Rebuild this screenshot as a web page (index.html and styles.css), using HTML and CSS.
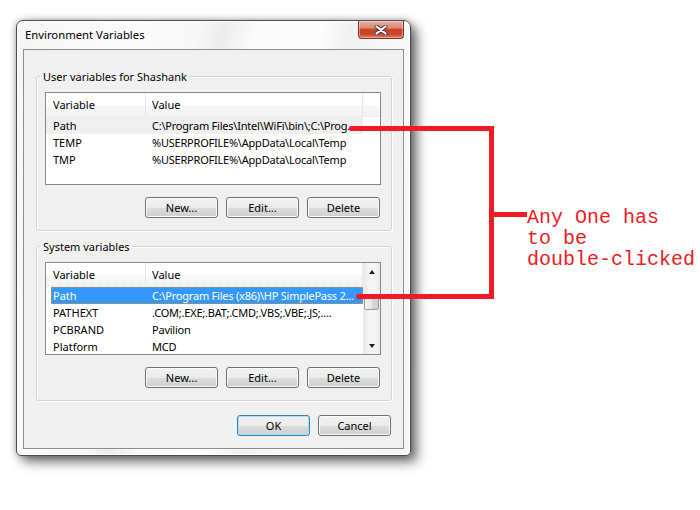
FILE: index.html
```html
<!DOCTYPE html>
<html lang="en">

<head>
  <link rel="stylesheet" href="styles.css">
</head>

<body>
  <div class="screen">
    <div class="window">
      <div class="titlebar">
        <span class="title">Environment Variables</span>
        <div class="close">
          <svg width="14" height="10" viewBox="0 0 14 10">
            <path d="M2.5 1.5 L11.5 8.5 M11.5 1.5 L2.5 8.5" stroke="#3d3d45" stroke-width="4" stroke-linecap="round" fill="none"/>
            <path d="M2.5 1.5 L11.5 8.5 M11.5 1.5 L2.5 8.5" stroke="#ffffff" stroke-width="2.2" stroke-linecap="round" fill="none"/>
          </svg>
        </div>
      </div>

      <div class="client">
        <fieldset class="group">
          <legend>User variables for Shashank</legend>
          <div class="group-body">
            <div class="list">
              <div class="list-main">
                <div class="list-head">
                  <div class="col c1">Variable</div>
                  <div class="col c2">Value</div>
                  <div class="col c3"></div>
                </div>
                <div class="row inactive">
                  <div class="c1">Path</div>
                  <div class="c2">C:\Program Files\Intel\WiFi\bin\;C:\Prog.</div>
                </div>
                <div class="row">
                  <div class="c1">TEMP</div>
                  <div class="c2">%USERPROFILE%\AppData\Local\Temp</div>
                </div>
                <div class="row">
                  <div class="c1">TMP</div>
                  <div class="c2">%USERPROFILE%\AppData\Local\Temp</div>
                </div>
              </div>
            </div>
            <div class="btn-row">
              <button class="btn">New...</button>
              <button class="btn">Edit...</button>
              <button class="btn">Delete</button>
            </div>
          </div>
        </fieldset>

        <fieldset class="group">
          <legend>System variables</legend>
          <div class="group-body">
            <div class="list">
              <div class="list-main">
                <div class="list-head">
                  <div class="col c1">Variable</div>
                  <div class="col c2">Value</div>
                </div>
                <div class="row selected">
                  <div class="c1">Path</div>
                  <div class="c2">C:\Program Files (x86)\HP SimplePass 2...</div>
                </div>
                <div class="row">
                  <div class="c1">PATHEXT</div>
                  <div class="c2">.COM;.EXE;.BAT;.CMD;.VBS;.VBE;.JS;....</div>
                </div>
                <div class="row">
                  <div class="c1">PCBRAND</div>
                  <div class="c2">Pavilion</div>
                </div>
                <div class="row">
                  <div class="c1">Platform</div>
                  <div class="c2">MCD</div>
                </div>
              </div>
              <div class="scrollbar">
                <div class="sb-arrow"><span class="tri up"></span></div>
                <div class="sb-gap"></div>
                <div class="sb-thumb"></div>
                <div class="sb-track"></div>
                <div class="sb-arrow"><span class="tri down"></span></div>
              </div>
            </div>
            <div class="btn-row">
              <button class="btn">New...</button>
              <button class="btn">Edit...</button>
              <button class="btn">Delete</button>
            </div>
          </div>
        </fieldset>

        <div class="dlg-row">
          <button class="btn default">OK</button>
          <button class="btn">Cancel</button>
        </div>
      </div>
    </div>

    <!-- red annotation drawn over the screenshot -->
    <div class="mark line-top"></div>
    <div class="mark line-vert"></div>
    <div class="mark line-bottom"></div>
    <div class="mark line-mid"></div>
    <div class="note">Any One has
to be
double-clicked</div>
  </div>
</body>

</html>
```

FILE: styles.css
```css
* {
  box-sizing: border-box;
}

body {
  margin: 0;
  background: #ffffff;
  font-family: "Noto Sans", "Open Sans", sans-serif;
  font-size: 11px;
  color: #000;
}

.screen {
  position: relative;
  width: 700px;
  height: 510px;
  overflow: hidden;
  padding: 20px 0 0 16px;
}

.window {
  width: 395px;
  height: 436px;
  border: 1px solid #4b4b4b;
  border-radius: 7px 7px 5px 5px;
  padding: 0 6px 6px;
  background: linear-gradient(105deg, #f5f5f5 0%, #fbfbfb 22%, #f7f7f7 36%, #ececec 41%, #fafafa 47%, #fdfdfd 60%, #f1f1f1 66%, #f9f9f9 76%, #f5f5f5 100%);
  box-shadow: inset 0 0 0 1px #ffffff, 6px 6px 12px rgba(0, 0, 0, 0.55), 0 0 7px rgba(0, 0, 0, 0.3);
}

.titlebar {
  height: 28px;
  display: flex;
  justify-content: space-between;
  align-items: flex-start;
}

.title {
  padding: 6px 0 0 2px;
  line-height: 15px;
  font-size: 11.3px;
}

.close {
  width: 46px;
  height: 18px;
  border: 1px solid #7a3226;
  border-top: none;
  border-radius: 0 0 4px 4px;
  background: linear-gradient(#eab0a2 0%, #dc8a77 40%, #c8442b 50%, #c9432a 75%, #e07a5c 100%);
  box-shadow: inset 0 0 0 1px rgba(255, 220, 210, 0.5);
  display: flex;
  align-items: center;
  justify-content: center;
}

.client {
  height: 400px;
  border: 1px solid #8d8d8d;
  background: #f0f0f0;
  padding: 19px 11px 0 12px;
}

.group {
  margin: 0;
  padding: 0;
  min-width: 0;
  border: 1px solid #cdd6dc;
  border-radius: 3px;
  box-shadow: inset 1px 1px 0 #ffffff, 1px 1px 0 #ffffff;
}

.group + .group {
  margin-top: 8px;
}

.group legend {
  margin-left: 4px;
  padding: 0 2px;
  line-height: 15px;
}

.group-body {
  padding: 8px 10px 12px 8px;
}

.list {
  height: 93px;
  border: 1px solid #828790;
  background: #ffffff;
  display: flex;
  overflow: hidden;
}

.list-main {
  flex: 1;
  min-width: 0;
}

.list-head {
  display: flex;
  height: 24px;
  background: linear-gradient(#ffffff 0%, #ffffff 50%, #f7f8f9 51%, #f2f3f5 100%);
  border-bottom: 1px solid #ececec;
}

.list-head .col {
  display: flex;
  align-items: center;
  padding-bottom: 1px;
  border-right: 1px solid #e3e6ea;
}

.c1 {
  width: 100px;
  padding-left: 7px;
  flex-shrink: 0;
}

.c2 {
  width: 217px;
  padding-left: 6px;
  flex-shrink: 0;
  white-space: nowrap;
  overflow: hidden;
}

.row .c2 {
  letter-spacing: -0.22px;
}

.list-head .c3 {
  flex: 1;
  border-right: none;
}

.row {
  display: flex;
  height: 17px;
  line-height: 17px;
  width: 317px;
}

.row.inactive {
  background: #efefef;
}

.row.selected {
  margin-left: 5px;
  width: 312px;
  background: #3399ff;
  color: #ffffff;
  outline: 1px dotted #d38a3a;
  outline-offset: -1px;
}

.row.selected .c1 {
  width: 95px;
  padding-left: 2px;
}

.scrollbar {
  width: 17px;
  display: flex;
  flex-direction: column;
  background: linear-gradient(90deg, #e8e8e8, #f5f5f5 30%, #f5f5f5 70%, #eaeaea);
  border-left: 1px solid #efefef;
}

.sb-arrow {
  height: 17px;
  display: flex;
  align-items: center;
  justify-content: center;
}

.sb-gap {
  height: 17px;
}

.sb-thumb {
  height: 13px;
  margin: 0 1px 0 0;
  border: 1px solid #999999;
  border-radius: 2px;
  background: linear-gradient(90deg, #f4f4f4, #e8e8e8 50%, #d8d8d8 51%, #d0d0d0);
}

.sb-track {
  flex: 1;
}

.tri {
  width: 0;
  height: 0;
  border-left: 3.5px solid transparent;
  border-right: 3.5px solid transparent;
}

.tri.up {
  border-bottom: 4px solid #202020;
}

.tri.down {
  border-top: 4px solid #202020;
}

.btn-row {
  display: flex;
  justify-content: flex-end;
  gap: 8px;
  margin-top: 12px;
  padding-right: 1px;
}

.btn {
  width: 73px;
  height: 21px;
  padding: 0;
  border: 1px solid #707070;
  border-radius: 3px;
  background: linear-gradient(#f2f2f2 0%, #ebebeb 50%, #dddddd 51%, #cfcfcf 100%);
  box-shadow: inset 0 0 0 1px #fbfbfb;
  font-family: inherit;
  font-size: 11px;
  color: #000;
}

.btn.default {
  border-color: #3c7fb1;
  box-shadow: inset 0 0 0 1px #a9e2f8;
}

.dlg-row {
  display: flex;
  justify-content: flex-end;
  gap: 8px;
  margin-top: 14px;
  padding-right: 1px;
}

.mark {
  position: absolute;
  background: #ed1c24;
}

.line-top {
  left: 349px;
  top: 126px;
  width: 145px;
  height: 5px;
  border-radius: 2px 0 0 2px;
}

.line-vert {
  left: 489px;
  top: 126px;
  width: 5px;
  height: 173px;
}

.line-bottom {
  left: 356px;
  top: 294px;
  width: 138px;
  height: 5px;
  border-radius: 2px 0 0 2px;
}

.line-mid {
  left: 494px;
  top: 212px;
  width: 33px;
  height: 5px;
}

.note {
  position: absolute;
  left: 527px;
  top: 207px;
  color: #ed1c24;
  font-family: "Liberation Mono", monospace;
  font-size: 20px;
  line-height: 21px;
  white-space: pre;
}
```
